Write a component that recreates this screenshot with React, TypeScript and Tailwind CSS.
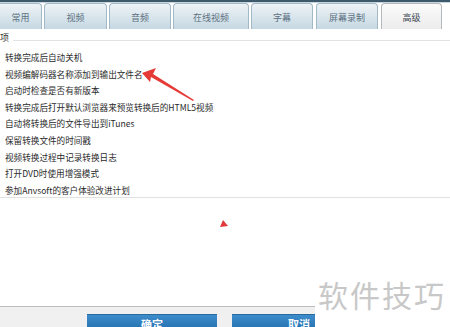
import React from "react";

const tabs = [
  { label: "常用", w: "w-[42px]", ml: "ml-0", active: false },
  { label: "视频", w: "w-[63px]", ml: "ml-[2px]", active: false },
  { label: "音频", w: "w-[62px]", ml: "ml-[2px]", active: false },
  { label: "在线视频", w: "w-[76px]", ml: "ml-[2px]", active: false },
  { label: "字幕", w: "w-[62px]", ml: "ml-[2px]", active: false },
  { label: "屏幕录制", w: "w-[62px]", ml: "ml-[3px]", active: false },
  { label: "高级", w: "w-[61px]", ml: "ml-[3px]", active: true },
];

const items = [
  "转换完成后自动关机",
  "视频编解码器名称添加到输出文件名",
  "启动时检查是否有新版本",
  "转换完成后打开默认浏览器来预览转换后的HTML5视频",
  "自动将转换后的文件导出到iTunes",
  "保留转换文件的时间戳",
  "视频转换过程中记录转换日志",
  "打开DVD时使用增强模式",
  "参加Anvsoft的客户体验改进计划",
];

export default function App() {
  return (
    <div
      className="relative w-[450px] h-[327px] overflow-hidden bg-white flex flex-col"
      style={{ fontFamily: '"Noto Sans CJK SC", "Noto Sans", sans-serif' }}
    >
      <div className="h-[2px] bg-[#3d5a6c] shrink-0" />
      <div className="h-[1px] bg-[#c9d6de] shrink-0" />
      <div className="flex h-[26px] shrink-0">
        {tabs.map((t, i) => (
          <div
            key={t.label}
            className={`${t.w} ${t.ml} h-full flex items-center justify-center text-[9px] ${
              i === 0 ? "rounded-tr-[4px] border-r border-t" : "rounded-t-[4px] border-l border-r border-t"
            } ${
              t.active
                ? "border-[#b4b9bd] bg-gradient-to-b from-[#fbfbfb] to-[#ececec] text-[#3b4650]"
                : "border-[#a4b9c6] bg-gradient-to-b from-[#eef3f6] to-[#c5d8e3] text-[#5b7080]"
            }`}
          >
            <span className="mt-[2px]">{t.label}</span>
          </div>
        ))}
      </div>
      <div className="relative h-[12px] shrink-0">
        <div className="absolute left-0 right-0 top-[11px] h-px bg-[#e2e2e2]" />
        <span className="absolute left-0 top-[3px] bg-white pr-[4px] text-[9px] leading-[12px] text-[#333]">项</span>
      </div>
      <div className="pl-[5px] pt-[8px] h-[157px] shrink-0 border-b border-[#e2e2e2]">
        {items.map((it) => (
          <div key={it} className="h-[16.6px] leading-[16.6px] text-[8.6px] text-[#2a2a2a] whitespace-nowrap">
            {it}
          </div>
        ))}
      </div>
      <div className="flex-1" />
      <div className="h-[21px] shrink-0 border-t border-[#bdbdbd] bg-[#f0f0f0] flex pt-[7px]">
        <div className="ml-[87px] w-[130px] h-[20px] bg-gradient-to-b from-[#3d8ccb] to-[#1d6aa8] border-t border-[#2a6a9c] text-white text-[11px] font-bold flex justify-center">
          <span className="mt-[3px] leading-[12px]">确定</span>
        </div>
        <div className="ml-[15px] w-[83px] h-[20px] bg-gradient-to-b from-[#3d8ccb] to-[#1d6aa8] border-t border-[#2a6a9c] text-white text-[11px] font-bold flex justify-end pr-[5px]">
          <span className="mt-[3px] leading-[12px]">取消</span>
        </div>
      </div>

      {/* watermark overlay */}
      <div className="absolute left-[315px] top-[272px] w-[135px] h-[55px] bg-white">
        <span className="absolute left-[3px] top-[2px] text-[30px] leading-[40px] text-[#c8c8c8] tracking-[2px] whitespace-nowrap">
          软件技巧
        </span>
      </div>

      {/* red annotation arrow */}
      <svg className="absolute left-0 top-0 pointer-events-none" width="450" height="327">
        <polygon points="142,73 156,68 153,74 194,100 193,101 151,77 150,82" fill="#e53a35" />
        <polygon points="220,227 228,226 223,220" fill="#e0393b" />
      </svg>
    </div>
  );
}
